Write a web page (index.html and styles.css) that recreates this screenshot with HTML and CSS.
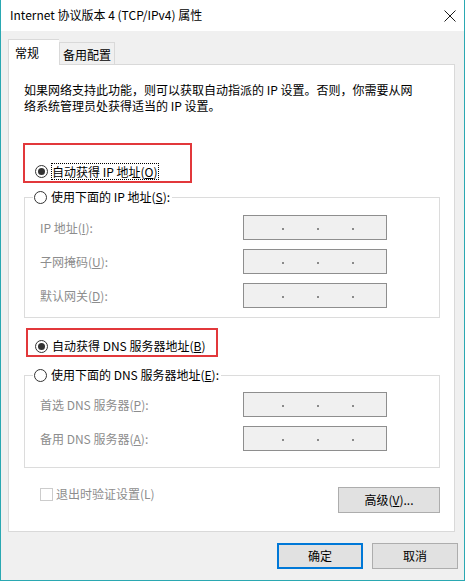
FILE: index.html
```html
<!DOCTYPE html>
<html lang="zh-CN">
<head>
    <meta charset="UTF-8">
    <meta name="viewport" content="width=device-width, initial-scale=1.0">
    <title>Internet 协议版本 4 (TCP/IPv4) 属性</title>
    <link rel="stylesheet" href="styles.css">
</head>
<body>
<div class="window">
    <div class="titlebar">
        <span class="title">Internet 协议版本 4 (TCP/IPv4) 属性</span>
        <span class="close">
            <svg width="12" height="12" viewBox="0 0 12 12">
                <path d="M0.5 0.5 L11.5 11.5 M11.5 0.5 L0.5 11.5" stroke="#1a1a1a" stroke-width="1" fill="none"/>
            </svg>
        </span>
    </div>

    <div class="content">
        <div class="tabs">
            <div class="tab active">常规</div>
            <div class="tab">备用配置</div>
        </div>

        <div class="panel">
            <p class="desc">如果网络支持此功能，则可以获取自动指派的 IP 设置。否则，你需要从网<br>络系统管理员处获得适当的 IP 设置。</p>

            <div class="mark mark-ip">
                <label class="radio-row">
                    <span class="radio checked"></span>
                    <span class="focus">自动获得 IP 地址(<u>O</u>)</span>
                </label>
            </div>

            <fieldset class="group group-ip">
                <legend>
                    <label class="radio-row">
                        <span class="radio"></span>
                        <span class="text">使用下面的 IP 地址(<u>S</u>):</span>
                    </label>
                </legend>
                <div class="row">
                    <span class="row-label">IP 地址(<u>I</u>):</span>
                    <span class="ip-box"><i></i><i></i><i></i></span>
                </div>
                <div class="row">
                    <span class="row-label">子网掩码(<u>U</u>):</span>
                    <span class="ip-box"><i></i><i></i><i></i></span>
                </div>
                <div class="row">
                    <span class="row-label">默认网关(<u>D</u>):</span>
                    <span class="ip-box"><i></i><i></i><i></i></span>
                </div>
            </fieldset>

            <div class="mark mark-dns">
                <label class="radio-row">
                    <span class="radio checked"></span>
                    <span class="text">自动获得 DNS 服务器地址(<u>B</u>)</span>
                </label>
            </div>

            <fieldset class="group group-dns">
                <legend>
                    <label class="radio-row">
                        <span class="radio"></span>
                        <span class="text">使用下面的 DNS 服务器地址(<u>E</u>):</span>
                    </label>
                </legend>
                <div class="row">
                    <span class="row-label">首选 DNS 服务器(<u>P</u>):</span>
                    <span class="ip-box"><i></i><i></i><i></i></span>
                </div>
                <div class="row">
                    <span class="row-label">备用 DNS 服务器(<u>A</u>):</span>
                    <span class="ip-box"><i></i><i></i><i></i></span>
                </div>
            </fieldset>

            <div class="bottom-row">
                <label class="check-row">
                    <span class="checkbox"></span>
                    <span>退出时验证设置(L)</span>
                </label>
                <button class="btn btn-advanced">高级(<u>V</u>)...</button>
            </div>
        </div>

        <div class="footer">
            <button class="btn btn-default">确定</button>
            <button class="btn">取消</button>
        </div>
    </div>
</div>
</body>
</html>
```

FILE: styles.css
```css
body {
    margin: 0;
    font-family: "Noto Sans CJK SC", "Noto Sans", sans-serif;
    font-size: 12px;
    line-height: 16px;
    color: #000;
    background-color: #fff;
}
.window {
    width: 465px;
    height: 581px;
    box-sizing: border-box;
    border: 1px solid #2aa8b2;
    border-top: none;
    display: flex;
    flex-direction: column;
}
.titlebar {
    height: 31px;
    flex-shrink: 0;
    background-color: #fff;
    display: flex;
    align-items: center;
    justify-content: space-between;
    padding: 0 8px 0 9px;
}
.title {
    font-size: 12px;
    margin-top: -1px;
}
.close {
    width: 12px;
    height: 12px;
    margin-top: 1px;
}
.close svg {
    display: block;
}
.content {
    flex: 1;
    background-color: #f0f0f0;
    padding: 8px 0 0 7px;
}
.tabs {
    display: flex;
    align-items: flex-end;
    margin-bottom: -1px;
    position: relative;
}
.tab {
    box-sizing: border-box;
    height: 22px;
    padding: 0 3px;
    margin-bottom: 1px;
    border: 1px solid #d9d9d9;
    border-bottom: none;
    background-color: #f0f0f0;
    display: flex;
    align-items: center;
    padding-top: 3px;
}
.tab.active {
    width: 51px;
    height: 26px;
    margin-bottom: 0;
    padding: 0 0 0 6px;
    background-color: #fff;
    border-right: none;
    position: relative;
    z-index: 1;
}
.panel {
    width: 447px;
    height: 468px;
    box-sizing: border-box;
    background-color: #fff;
    border: 1px solid #d9d9d9;
    padding: 0 14px 0 15px;
}
.desc {
    margin: 17px 0 0 0;
}
.mark {
    box-sizing: border-box;
    border: 2px solid #e2383b;
}
.mark-ip {
    width: 169px;
    height: 40px;
    margin: 29px 0 0 -1px;
    padding: 17px 0 0 10px;
}
.mark-dns {
    width: 192px;
    height: 29px;
    margin: 10px 0 0 2px;
    padding: 7px 0 0 7px;
}
.radio-row {
    display: flex;
    align-items: center;
    height: 18px;
}
.radio {
    width: 13px;
    height: 13px;
    box-sizing: border-box;
    border: 1px solid #333;
    border-radius: 50%;
    background-color: #fff;
    display: flex;
    align-items: center;
    justify-content: center;
    margin-right: 3px;
}
.radio.checked::after {
    content: "";
    width: 7px;
    height: 7px;
    border-radius: 50%;
    background-color: #333;
}
.focus {
    border: 1px dotted #000;
    padding: 0 0 0 0;
    line-height: 15px;
}
.text {
    padding-left: 1px;
}
.group {
    width: 416px;
    box-sizing: border-box;
    margin: 0;
    padding: 0;
    border: 1px solid #dcdcdc;
    min-inline-size: 0;
}
.group legend {
    margin-left: 8px;
    padding: 0 2px 0 1px;
    line-height: 16px;
}
.group legend .radio-row {
    height: 16px;
}
.group-ip {
    margin-top: 6px;
    padding-bottom: 9px;
}
.group-dns {
    margin-top: 10px;
    padding-bottom: 16px;
}
.row {
    display: flex;
    align-items: center;
    padding-left: 15px;
    margin-top: 9px;
}
.row:first-of-type {
    margin-top: 10px;
}
.group-dns .row:first-of-type {
    margin-top: 9px;
}
.row-label {
    width: 203px;
    color: #8d8d8d;
}
.ip-box {
    width: 144px;
    height: 25px;
    box-sizing: border-box;
    border: 1px solid #8e8e8e;
    background-color: #f0f0f0;
    display: flex;
    align-items: center;
    gap: 33px;
    padding: 3px 0 0 38px;
}
.ip-box i {
    display: block;
    width: 2px;
    height: 2px;
    background-color: #8a8a8a;
}
.bottom-row {
    display: flex;
    justify-content: space-between;
    align-items: flex-start;
    margin-top: 18px;
    padding-left: 16px;
}
.check-row {
    display: flex;
    align-items: center;
    color: #8d8d8d;
    height: 16px;
}
.checkbox {
    width: 13px;
    height: 13px;
    box-sizing: border-box;
    border: 1px solid #cccccc;
    background-color: #fff;
    margin-right: 3px;
    margin-top: 1px;
}
.btn {
    font-family: "Noto Sans CJK SC", "Noto Sans", sans-serif;
    font-size: 12px;
    line-height: 16px;
    color: #000;
    width: 86px;
    height: 26px;
    box-sizing: border-box;
    background-color: #e1e1e1;
    border: 1px solid #adadad;
    padding: 0;
    margin: 0;
}
.btn-advanced {
    width: 102px;
    margin-top: 1px;
}
.btn-default {
    border: 2px solid #0078d7;
}
.footer {
    display: flex;
    justify-content: flex-end;
    gap: 9px;
    margin-top: 11px;
    padding-right: 6px;
}
```
